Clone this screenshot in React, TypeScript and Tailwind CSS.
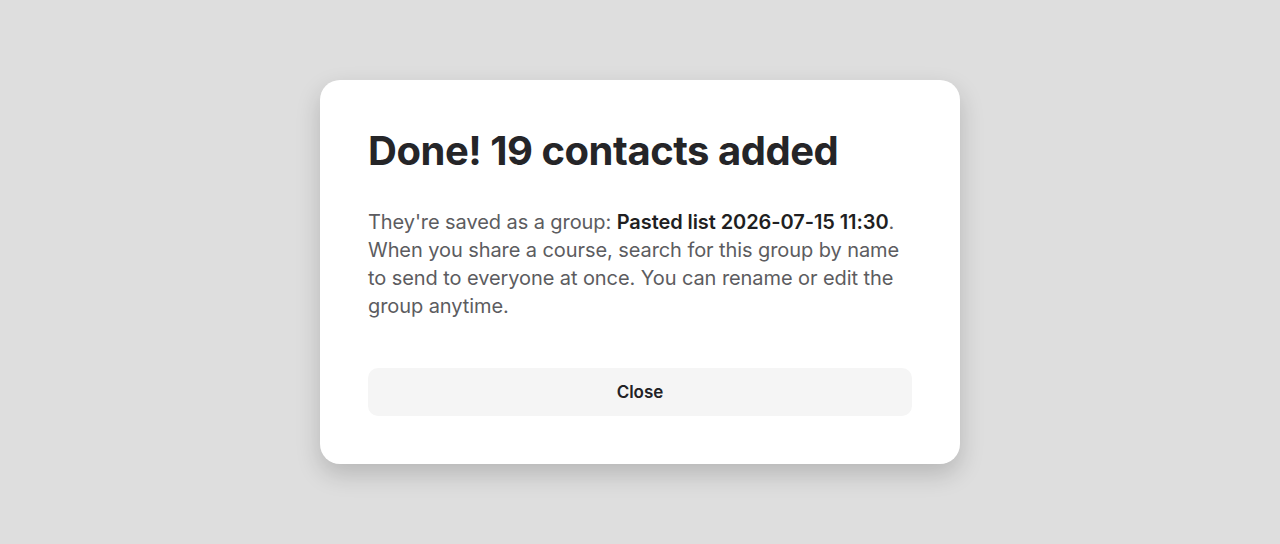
import React from 'react';

const App = () => {
  const groupName = 'Pasted list 2026-07-15 11:30';

  return (
    <div
      className="flex h-[544px] w-full items-center justify-center bg-[#dedede]"
      style={{ fontFamily: 'Inter, "Noto Sans", sans-serif' }}
    >
      <div className="w-[640px] rounded-[20px] bg-white p-12 shadow-[0_10px_24px_rgba(0,0,0,0.18)]">
        <h1 className="text-[40px] font-bold leading-[45px] tracking-[-0.012em] text-[#252528]">
          Done! 19 contacts added
        </h1>
        <p className="mt-[35px] text-[20px] leading-[28px] tracking-[-0.004em] text-[#5c5c60]">
          They're saved as a group: <span className="font-semibold text-[#1f1f22]">{groupName}</span>.
          When you share a course, search for this group by name to send to everyone at once. You can rename
          or edit the group anytime.
        </p>
        <button className="mt-12 flex h-12 w-full items-center justify-center rounded-[10px] bg-[#f5f5f5] pt-0.5 text-[17px] font-semibold text-[#222225]">
          Close
        </button>
      </div>
    </div>
  );
};

export default App;
